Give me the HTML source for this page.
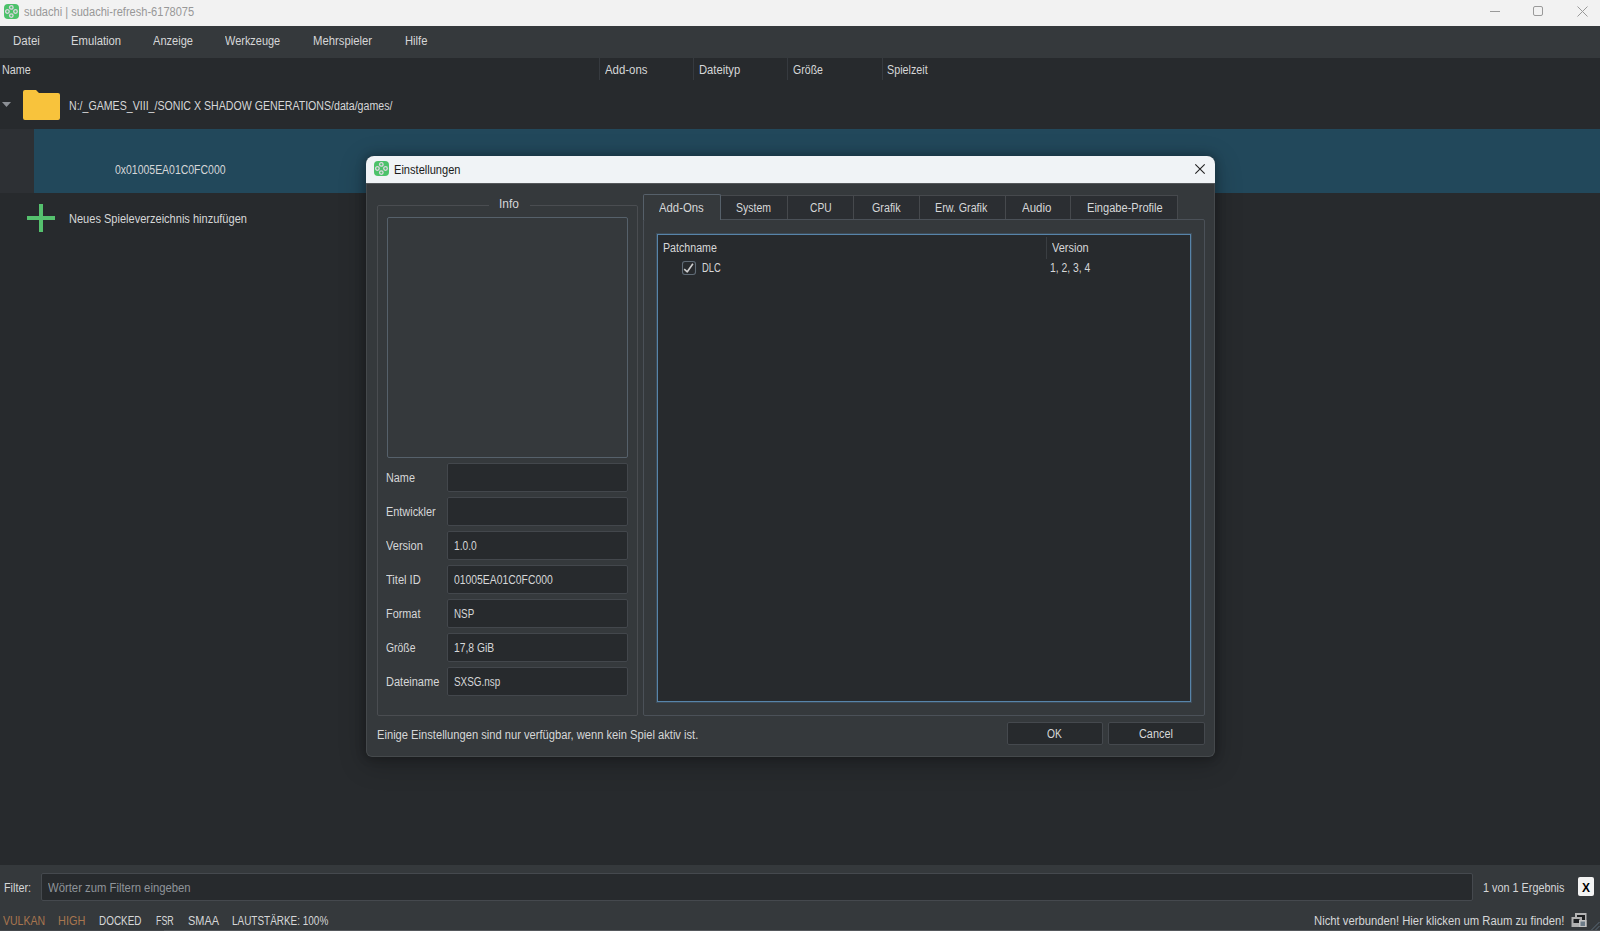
<!DOCTYPE html>
<html><head><meta charset="utf-8">
<style>
html,body{margin:0;padding:0;}
body{width:1600px;height:931px;overflow:hidden;position:relative;background:#272a2d;font-family:"Liberation Sans",sans-serif;}
.a{position:absolute;box-sizing:border-box;}
.t{position:absolute;transform-origin:0 0;white-space:nowrap;line-height:14px;font-family:"Liberation Sans",sans-serif;}
</style></head><body>
<!-- title bar -->
<div class="a" style="left:0;top:0;width:1600px;height:26px;background:#f2f2f2"></div>
<svg class="a" style="left:4px;top:4px" width="15" height="15" viewBox="0 0 15 15">
 <rect x="0" y="0" width="15" height="15" rx="4" fill="#4cc26a"/>
 <g fill="none" stroke="#ddd6e0" stroke-width="1.3">
  <circle cx="7.3" cy="3.4" r="1.8"/><circle cx="3.4" cy="7.5" r="1.8"/><circle cx="11.5" cy="7.5" r="1.8"/><circle cx="7.3" cy="11.6" r="1.8"/>
 </g>
</svg>
<!-- window controls -->
<div class="a" style="left:1490px;top:11px;width:10px;height:1px;background:#9a9a9a"></div>
<div class="a" style="left:1533px;top:6px;width:10px;height:10px;border:1px solid #9a9a9a;border-radius:2px"></div>
<svg class="a" style="left:1577px;top:6px" width="11" height="11" viewBox="0 0 11 11"><path d="M0.5 0.5L10.5 10.5M10.5 0.5L0.5 10.5" stroke="#9a9a9a" stroke-width="1"/></svg>
<!-- menu bar -->
<div class="a" style="left:0;top:26px;width:1600px;height:32px;background:#35393c"></div>
<!-- header separators -->
<div class="a" style="left:599px;top:58px;width:1px;height:22px;background:#363a3f"></div>
<div class="a" style="left:693px;top:58px;width:1px;height:22px;background:#363a3f"></div>
<div class="a" style="left:787px;top:58px;width:1px;height:22px;background:#363a3f"></div>
<div class="a" style="left:882px;top:58px;width:1px;height:22px;background:#363a3f"></div>
<!-- tree: folder row -->
<svg class="a" style="left:2px;top:102px" width="10" height="6" viewBox="0 0 10 6"><path d="M0 0H9L4.5 5Z" fill="#8c9096"/></svg>
<svg class="a" style="left:23px;top:90px" width="37" height="30" viewBox="0 0 37 30">
 <path d="M2 0H13L16 3H35A2 2 0 0 1 37 5V28A2 2 0 0 1 35 30H2A2 2 0 0 1 0 28V2A2 2 0 0 1 2 0Z" fill="#f8c33c"/>
</svg>
<!-- selected row -->
<div class="a" style="left:0;top:129px;width:34px;height:64px;background:#2d3034"></div>
<div class="a" style="left:34px;top:129px;width:1566px;height:64px;background:#22485b"></div>
<!-- plus -->
<div class="a" style="left:27px;top:216px;width:28px;height:4px;background:#55c16e"></div>
<div class="a" style="left:39px;top:204px;width:4px;height:28px;background:#55c16e"></div>
<!-- bottom bar -->
<div class="a" style="left:0;top:865px;width:1600px;height:66px;background:#35393c"></div>
<div class="a" style="left:41px;top:873px;width:1432px;height:28px;background:#272a2d;border:1px solid #45494e;border-radius:2px"></div>
<div class="a" style="left:1578px;top:877px;width:16px;height:18.5px;background:#f3f3f3;border-radius:2px"></div>
<div class="t" style="left:1582px;top:880.5px;font-size:12px;font-weight:bold;color:#000">X</div>
<svg class="a" style="left:1571px;top:912px" width="17" height="16" viewBox="0 0 17 16">
 <rect x="4" y="1" width="11.5" height="14" fill="#b4b4b4"/>
 <rect x="6" y="3" width="8" height="5" fill="#1e2022"/>
 <rect x="0.5" y="5" width="10.5" height="10" fill="#b0b0b0"/>
 <rect x="2.5" y="7" width="6" height="4" fill="#1e2022"/>
 <rect x="8" y="8" width="7.5" height="7" fill="#c4c4c4"/>
 <rect x="9.5" y="9.5" width="4.5" height="4.5" fill="#6d7c89"/>
</svg>
<svg class="a" style="left:1590px;top:921px" width="10" height="10" viewBox="0 0 10 10"><path d="M9.5 1L1 9.5M9.5 5L5 9.5" stroke="#5b6b79" stroke-width="1"/></svg>
<div class="a" style="left:0;top:930px;width:164px;height:1px;background:#44484c"></div>
<div class="a" style="left:164px;top:930px;width:1436px;height:1px;background:#53575b"></div>

<!-- dialog -->
<div class="a" style="left:366px;top:156px;width:849px;height:601px;border-radius:8px 8px 6px 6px;background:#35393c;box-shadow:0 0 8px 2px rgba(0,0,0,0.22),0 6px 26px 2px rgba(0,0,0,0.22);overflow:hidden">
  <div class="a" style="left:0;top:0;width:849px;height:27px;background:#f0f3f6"></div>
  <div class="a" style="left:0;top:27px;width:849px;height:1px;background:#55585b"></div>
  <div class="a" style="left:0;top:28px;width:849px;height:573px;border:1px solid #45494c;border-top:none;border-radius:0 0 6px 6px"></div>
</div>
<svg class="a" style="left:374px;top:161px" width="15" height="15" viewBox="0 0 15 15">
 <rect x="0" y="0" width="15" height="15" rx="4" fill="#4cc26a"/>
 <g fill="none" stroke="#ddd6e0" stroke-width="1.3">
  <circle cx="7.3" cy="3.4" r="1.8"/><circle cx="3.4" cy="7.5" r="1.8"/><circle cx="11.5" cy="7.5" r="1.8"/><circle cx="7.3" cy="11.6" r="1.8"/>
 </g>
</svg>
<svg class="a" style="left:1194px;top:163px" width="12" height="12" viewBox="0 0 12 12"><path d="M1.3 1.3L10.7 10.7M10.7 1.3L1.3 10.7" stroke="#222" stroke-width="1.1"/></svg>
<!-- info group -->
<div class="a" style="left:377px;top:205px;width:261px;height:511px;border:1px solid #4a4d51;border-radius:2px"></div>
<div class="a" style="left:489px;top:203px;width:41px;height:5px;background:#35393c"></div>
<div class="a" style="left:387px;top:217px;width:241px;height:241px;border:1px solid #56616b;border-radius:2px"></div>
<!-- inputs -->
<div class="a" style="left:447px;top:463px;width:181px;height:29px;background:#272a2d;border:1px solid #43474c;border-radius:2px"></div>
<div class="a" style="left:447px;top:497px;width:181px;height:29px;background:#272a2d;border:1px solid #43474c;border-radius:2px"></div>
<div class="a" style="left:447px;top:531px;width:181px;height:29px;background:#272a2d;border:1px solid #43474c;border-radius:2px"></div>
<div class="a" style="left:447px;top:565px;width:181px;height:29px;background:#272a2d;border:1px solid #43474c;border-radius:2px"></div>
<div class="a" style="left:447px;top:599px;width:181px;height:29px;background:#272a2d;border:1px solid #43474c;border-radius:2px"></div>
<div class="a" style="left:447px;top:633px;width:181px;height:29px;background:#272a2d;border:1px solid #43474c;border-radius:2px"></div>
<div class="a" style="left:447px;top:667px;width:181px;height:29px;background:#272a2d;border:1px solid #43474c;border-radius:2px"></div>
<!-- tabs -->
<div class="a" style="left:643px;top:219px;width:562px;height:497px;border:1px solid #4b5158;border-radius:2px"></div>
<div class="a" style="left:720px;top:195px;width:68px;height:24px;background:#2b2e32;border:1px solid #46494d;border-bottom:none"></div>
<div class="a" style="left:787px;top:195px;width:67px;height:24px;background:#2b2e32;border:1px solid #46494d;border-bottom:none"></div>
<div class="a" style="left:853px;top:195px;width:67px;height:24px;background:#2b2e32;border:1px solid #46494d;border-bottom:none"></div>
<div class="a" style="left:919px;top:195px;width:87px;height:24px;background:#2b2e32;border:1px solid #46494d;border-bottom:none"></div>
<div class="a" style="left:1005px;top:195px;width:66px;height:24px;background:#2b2e32;border:1px solid #46494d;border-bottom:none"></div>
<div class="a" style="left:1070px;top:195px;width:108px;height:24px;background:#2b2e32;border:1px solid #46494d;border-bottom:none"></div>
<div class="a" style="left:643px;top:194px;width:78px;height:26px;background:#35393c;border:1px solid #56606a;border-bottom:none;border-radius:2px 2px 0 0"></div>
<!-- table -->
<div class="a" style="left:657px;top:234px;width:534px;height:468px;background:#272a2d;border:1px solid #5784a9;box-shadow:0 0 0 1px rgba(87,132,169,0.25)"></div>
<div class="a" style="left:1046px;top:237px;width:1px;height:22px;background:#3a3e42"></div>
<svg class="a" style="left:681px;top:260px" width="16" height="16" viewBox="0 0 16 16">
 <rect x="1.5" y="1.5" width="13" height="13" rx="2.5" fill="#272a2d" stroke="#5f6b76" stroke-width="1.1"/>
 <path d="M3.2 9.2L6.3 11.8L11.9 3.8" fill="none" stroke="#cfcfcf" stroke-width="1.6" stroke-linejoin="round"/>
</svg>
<!-- buttons -->
<div class="a" style="left:1007px;top:722px;width:96px;height:23px;background:#272a2d;border:1px solid #45494e;border-radius:2px"></div>
<div class="a" style="left:1108px;top:722px;width:97px;height:23px;background:#272a2d;border:1px solid #45494e;border-radius:2px"></div>
<div class="t" style="left:24.30px;top:4.55px;color:#989898;font-size:12.5px;transform:scaleX(0.8851);font-weight:normal">sudachi | sudachi-refresh-6178075</div>
<div class="t" style="left:12.50px;top:34.10px;color:#d6d7d8;font-size:12px;transform:scaleX(0.9580);font-weight:normal">Datei</div>
<div class="t" style="left:71.00px;top:34.10px;color:#d6d7d8;font-size:12px;transform:scaleX(0.9395);font-weight:normal">Emulation</div>
<div class="t" style="left:152.90px;top:34.10px;color:#d6d7d8;font-size:12px;transform:scaleX(0.9224);font-weight:normal">Anzeige</div>
<div class="t" style="left:225.30px;top:34.10px;color:#d6d7d8;font-size:12px;transform:scaleX(0.9128);font-weight:normal">Werkzeuge</div>
<div class="t" style="left:313.00px;top:34.10px;color:#d6d7d8;font-size:12px;transform:scaleX(0.9411);font-weight:normal">Mehrspieler</div>
<div class="t" style="left:404.70px;top:34.10px;color:#d6d7d8;font-size:12px;transform:scaleX(0.9370);font-weight:normal">Hilfe</div>
<div class="t" style="left:1.50px;top:63.30px;color:#d6d7d8;font-size:12px;transform:scaleX(0.8968);font-weight:normal">Name</div>
<div class="t" style="left:604.50px;top:63.30px;color:#d6d7d8;font-size:12px;transform:scaleX(0.9509);font-weight:normal">Add-ons</div>
<div class="t" style="left:698.75px;top:63.30px;color:#d6d7d8;font-size:12px;transform:scaleX(0.9358);font-weight:normal">Dateityp</div>
<div class="t" style="left:792.50px;top:63.30px;color:#d6d7d8;font-size:12px;transform:scaleX(0.8811);font-weight:normal">Größe</div>
<div class="t" style="left:887.00px;top:63.30px;color:#d6d7d8;font-size:12px;transform:scaleX(0.8963);font-weight:normal">Spielzeit</div>
<div class="t" style="left:69.10px;top:98.60px;color:#d6d7d8;font-size:12px;transform:scaleX(0.8839);font-weight:normal">N:/_GAMES_VIII_/SONIC X SHADOW GENERATIONS/data/games/</div>
<div class="t" style="left:115.00px;top:163.00px;color:#d6d7d8;font-size:12px;transform:scaleX(0.8719);font-weight:normal">0x01005EA01C0FC000</div>
<div class="t" style="left:69.10px;top:212.00px;color:#d6d7d8;font-size:12px;transform:scaleX(0.9197);font-weight:normal">Neues Spieleverzeichnis hinzufügen</div>
<div class="t" style="left:4.00px;top:881.00px;color:#d6d7d8;font-size:12px;transform:scaleX(0.9017);font-weight:normal">Filter:</div>
<div class="t" style="left:48.25px;top:881.00px;color:#8f949a;font-size:12px;transform:scaleX(0.9421);font-weight:normal">Wörter zum Filtern eingeben</div>
<div class="t" style="left:1483.10px;top:881.00px;color:#d6d7d8;font-size:12px;transform:scaleX(0.9039);font-weight:normal">1 von 1 Ergebnis</div>
<div class="t" style="left:2.50px;top:914.30px;color:#a8764f;font-size:12px;transform:scaleX(0.8764);font-weight:normal">VULKAN</div>
<div class="t" style="left:57.75px;top:914.30px;color:#a8764f;font-size:12px;transform:scaleX(0.9119);font-weight:normal">HIGH</div>
<div class="t" style="left:98.75px;top:914.30px;color:#d6d7d8;font-size:12px;transform:scaleX(0.8273);font-weight:normal">DOCKED</div>
<div class="t" style="left:156.00px;top:914.30px;color:#d6d7d8;font-size:12px;transform:scaleX(0.7397);font-weight:normal">FSR</div>
<div class="t" style="left:187.50px;top:914.30px;color:#d6d7d8;font-size:12px;transform:scaleX(0.9117);font-weight:normal">SMAA</div>
<div class="t" style="left:232.00px;top:914.30px;color:#d6d7d8;font-size:12px;transform:scaleX(0.8292);font-weight:normal">LAUTSTÄRKE: 100%</div>
<div class="t" style="left:1313.90px;top:914.00px;color:#d6d7d8;font-size:12px;transform:scaleX(0.9382);font-weight:normal">Nicht verbunden! Hier klicken um Raum zu finden!</div>
<div class="t" style="left:393.70px;top:162.90px;color:#1b1b1b;font-size:12px;transform:scaleX(0.9232);font-weight:normal">Einstellungen</div>
<div class="t" style="left:499.40px;top:197.00px;color:#d6d7d8;font-size:12px;transform:scaleX(0.9927);font-weight:normal">Info</div>
<div class="t" style="left:386.30px;top:471.20px;color:#d6d7d8;font-size:12px;transform:scaleX(0.9030);font-weight:normal">Name</div>
<div class="t" style="left:386.30px;top:505.20px;color:#d6d7d8;font-size:12px;transform:scaleX(0.9089);font-weight:normal">Entwickler</div>
<div class="t" style="left:386.30px;top:539.20px;color:#d6d7d8;font-size:12px;transform:scaleX(0.9199);font-weight:normal">Version</div>
<div class="t" style="left:454.30px;top:539.20px;color:#d6d7d8;font-size:12px;transform:scaleX(0.8514);font-weight:normal">1.0.0</div>
<div class="t" style="left:386.30px;top:573.20px;color:#d6d7d8;font-size:12px;transform:scaleX(0.9237);font-weight:normal">Titel ID</div>
<div class="t" style="left:454.30px;top:573.20px;color:#d6d7d8;font-size:12px;transform:scaleX(0.8653);font-weight:normal">01005EA01C0FC000</div>
<div class="t" style="left:386.30px;top:607.20px;color:#d6d7d8;font-size:12px;transform:scaleX(0.9051);font-weight:normal">Format</div>
<div class="t" style="left:454.30px;top:607.20px;color:#d6d7d8;font-size:12px;transform:scaleX(0.8188);font-weight:normal">NSP</div>
<div class="t" style="left:386.30px;top:641.20px;color:#d6d7d8;font-size:12px;transform:scaleX(0.8679);font-weight:normal">Größe</div>
<div class="t" style="left:454.30px;top:641.20px;color:#d6d7d8;font-size:12px;transform:scaleX(0.8589);font-weight:normal">17,8 GiB</div>
<div class="t" style="left:386.30px;top:675.20px;color:#d6d7d8;font-size:12px;transform:scaleX(0.9185);font-weight:normal">Dateiname</div>
<div class="t" style="left:454.30px;top:675.20px;color:#d6d7d8;font-size:12px;transform:scaleX(0.8251);font-weight:normal">SXSG.nsp</div>
<div class="t" style="left:658.80px;top:200.70px;color:#d6d7d8;font-size:12px;transform:scaleX(0.9439);font-weight:normal">Add-Ons</div>
<div class="t" style="left:735.50px;top:201.00px;color:#d6d7d8;font-size:12px;transform:scaleX(0.8747);font-weight:normal">System</div>
<div class="t" style="left:810.00px;top:201.00px;color:#d6d7d8;font-size:12px;transform:scaleX(0.8512);font-weight:normal">CPU</div>
<div class="t" style="left:871.50px;top:201.00px;color:#d6d7d8;font-size:12px;transform:scaleX(0.8938);font-weight:normal">Grafik</div>
<div class="t" style="left:935.30px;top:201.00px;color:#d6d7d8;font-size:12px;transform:scaleX(0.8915);font-weight:normal">Erw. Grafik</div>
<div class="t" style="left:1022.10px;top:201.00px;color:#d6d7d8;font-size:12px;transform:scaleX(0.9575);font-weight:normal">Audio</div>
<div class="t" style="left:1086.50px;top:201.00px;color:#d6d7d8;font-size:12px;transform:scaleX(0.9226);font-weight:normal">Eingabe-Profile</div>
<div class="t" style="left:663.30px;top:241.00px;color:#d6d7d8;font-size:12px;transform:scaleX(0.8881);font-weight:normal">Patchname</div>
<div class="t" style="left:1051.50px;top:241.00px;color:#d6d7d8;font-size:12px;transform:scaleX(0.9148);font-weight:normal">Version</div>
<div class="t" style="left:701.50px;top:261.20px;color:#d6d7d8;font-size:12px;transform:scaleX(0.7806);font-weight:normal">DLC</div>
<div class="t" style="left:1049.70px;top:261.30px;color:#d6d7d8;font-size:12px;transform:scaleX(0.8634);font-weight:normal">1, 2, 3, 4</div>
<div class="t" style="left:376.50px;top:727.50px;color:#d6d7d8;font-size:12px;transform:scaleX(0.9299);font-weight:normal">Einige Einstellungen sind nur verfügbar, wenn kein Spiel aktiv ist.</div>
<div class="t" style="left:1046.70px;top:727.30px;color:#d6d7d8;font-size:12px;transform:scaleX(0.8538);font-weight:normal">OK</div>
<div class="t" style="left:1139.40px;top:727.30px;color:#d6d7d8;font-size:12px;transform:scaleX(0.9077);font-weight:normal">Cancel</div>
</body></html>
